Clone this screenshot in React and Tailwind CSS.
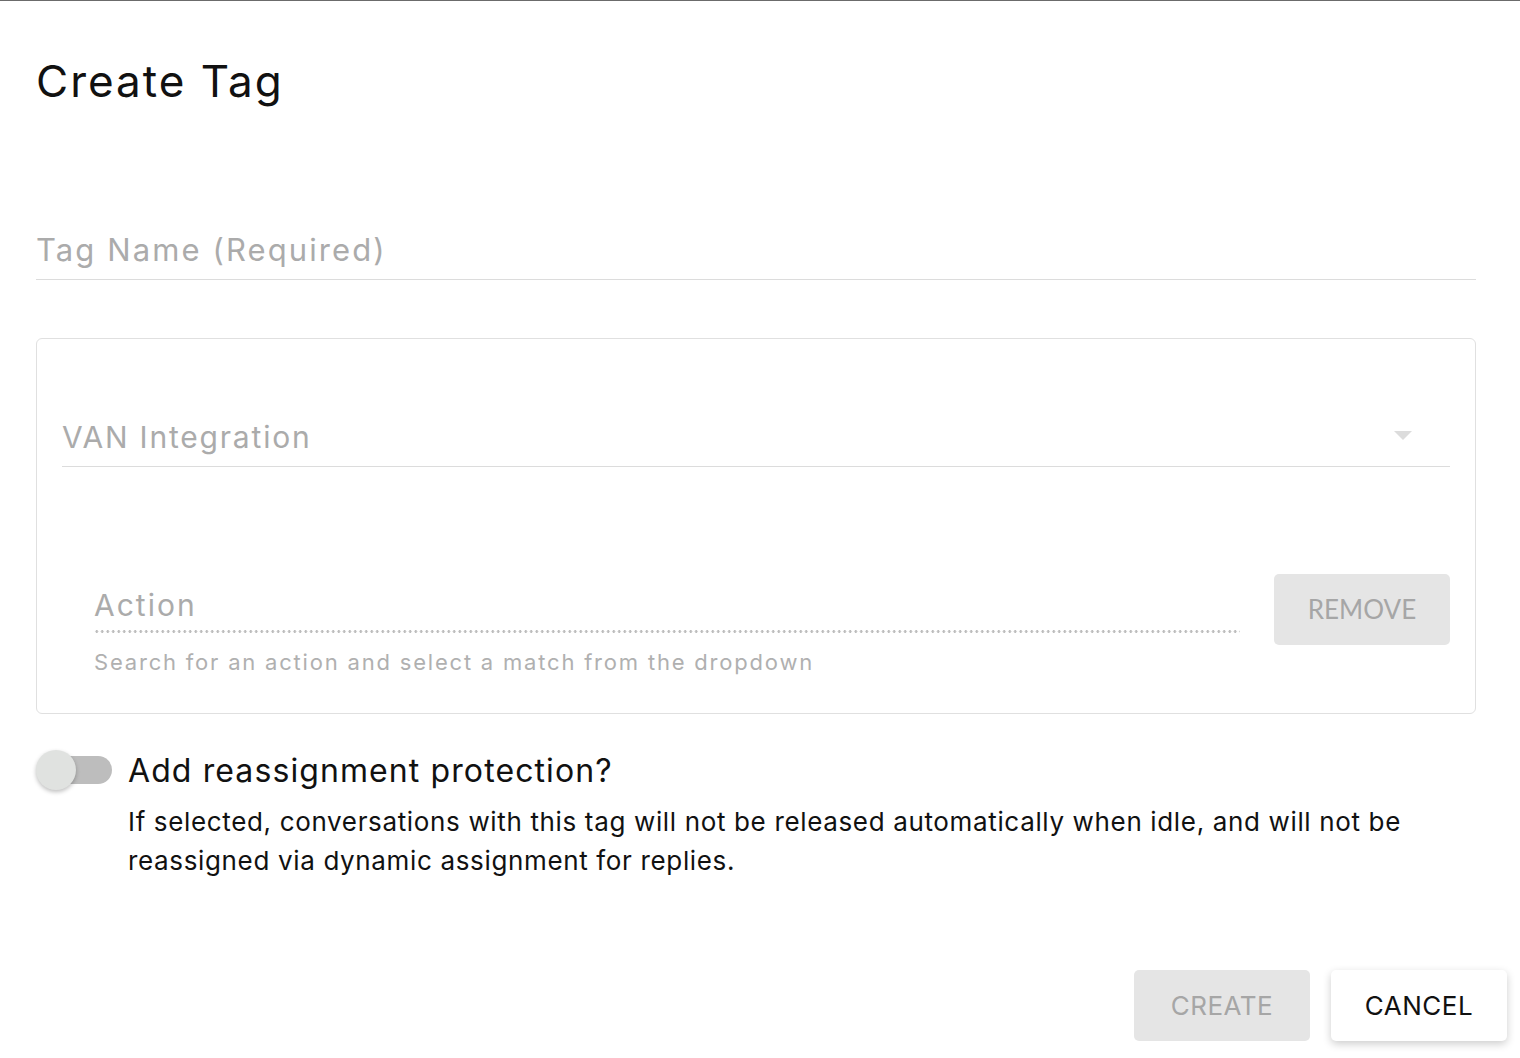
import React from 'react';

const font = { fontFamily: 'Inter, "Open Sans", sans-serif' };

export default function App() {
  return (
    <div className="min-h-[1058px] w-[1520px] bg-white border-t border-[#6b6b6b] text-[#111]" style={font}>
      <div className="pl-[36px] pr-[44px]">
        <h2 className="pt-[54px] text-[44px] leading-[52px] font-normal tracking-[2px]">Create Tag</h2>

        {/* tag name field */}
        <div className="mt-[123px] border-b border-[#dcdcdc] pb-[9px]">
          <div className="text-[31px] leading-[40px] tracking-[2.1px] text-[#ababab]">Tag Name (Required)</div>
        </div>

        {/* VAN integration box */}
        <div className="mt-[58px] rounded-[6px] border border-[#e0e0e0] px-[25px] pt-[78px] pb-[36px]">
          <div className="flex items-center justify-between border-b border-[#dcdcdc] pb-[9px]">
            <span className="text-[30px] leading-[40px] tracking-[1.8px] text-[#ababab]">VAN Integration</span>
            <svg width="18" height="9" viewBox="0 0 18 9" className="mr-[38px] -mt-[3px]">
              <path d="M0 0 L18 0 L9 9 Z" fill="#dcdcdc" />
            </svg>
          </div>

          <div className="mt-[107px] flex items-start gap-[34px]">
            <div className="flex-1 pl-[32px] pt-[11px]">
              <div className="text-[30px] leading-[40px] tracking-[2px] text-[#ababab]">Action</div>
              <div className="mt-[5px] h-[3px] bg-[radial-gradient(circle,#bdbdbd_1.2px,transparent_1.6px)] bg-[length:5.5px_3px] bg-repeat-x" />
              <div className="mt-[14px] text-[22px] leading-[30px] tracking-[1.8px] text-[#b0b0b0]">
                Search for an action and select a match from the dropdown
              </div>
            </div>
            <button
              className="h-[71px] w-[176px] rounded-[5px] bg-[#e5e5e5] text-[26px] text-[#a6a6a6]"
              style={{ fontFamily: 'Lato, "Open Sans", sans-serif' }}
            >
              REMOVE
            </button>
          </div>
        </div>

        {/* reassignment protection */}
        <div className="mt-[35px] flex items-start">
          <div className="relative mt-[7px] h-[28px] w-[92px] shrink-0">
            <div className="absolute left-[8px] top-0 h-[28px] w-[68px] rounded-full bg-[#bdbdbd]" />
            <div className="absolute -top-[6px] left-0 h-[40px] w-[40px] rounded-full bg-[#e0e2e0] shadow-[0_2px_4px_rgba(0,0,0,0.25)]" />
          </div>
          <div>
            <div className="text-[32px] leading-[44px] tracking-[1.1px] text-[#111]">Add reassignment protection?</div>
            <p className="mt-[9px] text-[26px] leading-[39px] tracking-[0.65px] text-[#111]">
              If selected, conversations with this tag will not be released automatically when idle, and will not be
              <br />
              reassigned via dynamic assignment for replies.
            </p>
          </div>
        </div>
      </div>

      {/* actions */}
      <div className="mt-[90px] flex justify-end gap-[21px] pr-[13px]">
        <button className="h-[71px] w-[176px] rounded-[5px] bg-[#e5e5e5] text-[26px] tracking-[0.5px] text-[#a6a6a6]">CREATE</button>
        <button className="h-[71px] w-[176px] rounded-[5px] bg-white text-[26px] tracking-[0.5px] text-[#111] shadow-[0_3px_8px_rgba(0,0,0,0.2)]">
          CANCEL
        </button>
      </div>
    </div>
  );
}
